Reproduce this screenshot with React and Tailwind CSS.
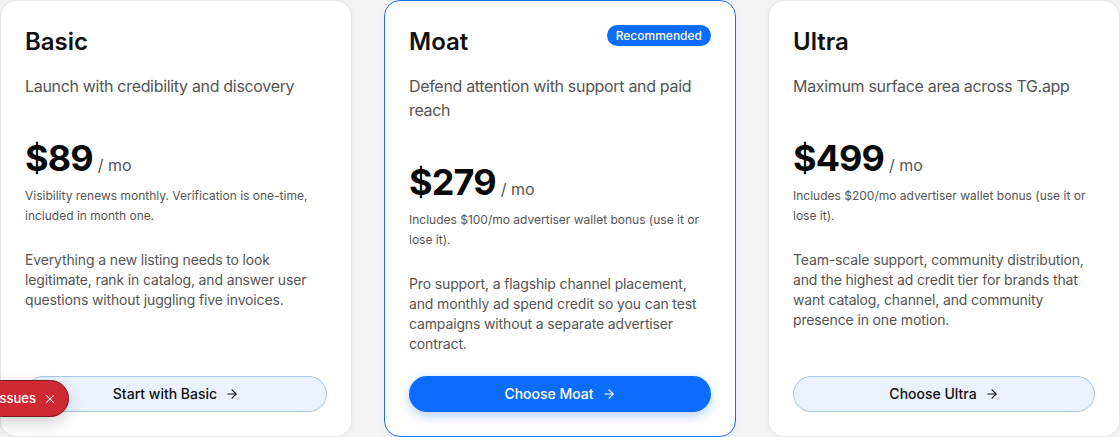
import { ArrowRight, X } from 'lucide-react';

const plans = [
  {
    name: 'Basic',
    tagline: 'Launch with credibility and discovery',
    price: '$89',
    note: 'Visibility renews monthly. Verification is one-time, included in month one.',
    body: 'Everything a new listing needs to look legitimate, rank in catalog, and answer user questions without juggling five invoices.',
    cta: 'Start with Basic',
  },
  {
    name: 'Moat',
    tagline: 'Defend attention with support and paid reach',
    price: '$279',
    note: 'Includes $100/mo advertiser wallet bonus (use it or lose it).',
    body: 'Pro support, a flagship channel placement, and monthly ad spend credit so you can test campaigns without a separate advertiser contract.',
    cta: 'Choose Moat',
    featured: true,
  },
  {
    name: 'Ultra',
    tagline: 'Maximum surface area across TG.app',
    price: '$499',
    note: 'Includes $200/mo advertiser wallet bonus (use it or lose it).',
    body: 'Team-scale support, community distribution, and the highest ad credit tier for brands that want catalog, channel, and community presence in one motion.',
    cta: 'Choose Ultra',
  },
];

function PlanCard({ plan }) {
  return (
    <div
      className={[
        'flex flex-col rounded-2xl border bg-white p-6',
        plan.featured
          ? 'border-[#1a73f0] shadow-[0_2px_10px_rgba(10,108,255,0.08)]'
          : 'border-[#e6e6e6] shadow-[0_1px_6px_rgba(0,0,0,0.05)]',
      ].join(' ')}
    >
      <div className="flex items-start justify-between">
        <h3 className="pt-px text-2xl leading-8 font-semibold text-[#111]">{plan.name}</h3>
        {plan.featured && (
          <span className="rounded-full bg-[#0b6cff] px-[9px] py-[2px] text-xs leading-[17px] font-medium text-white">
            Recommended
          </span>
        )}
      </div>
      <p className="mt-4 text-base leading-6 tracking-[-0.02em] text-[#555]">{plan.tagline}</p>
      <div className="mt-10 flex items-baseline gap-[5px]">
        <span className="text-4xl leading-10 font-bold tracking-tight text-[#0a0a0a]">{plan.price}</span>
        <span className="text-base text-[#555]">/ mo</span>
      </div>
      <p className="mt-2 text-xs leading-5 text-[#555]">{plan.note}</p>
      <p className="mt-6 text-sm leading-5 tracking-[-0.01em] text-[#555]">{plan.body}</p>
      <button
        className={[
          'mt-auto flex h-9 w-full items-center justify-center gap-2 rounded-full text-sm font-medium',
          plan.featured
            ? 'bg-[#0b6cff] text-white shadow-[0_4px_12px_rgba(11,108,255,0.3)]'
            : 'border border-[#a8c5ee] bg-[#eaf2fe] text-[#111]',
        ].join(' ')}
      >
        {plan.cta}
        <ArrowRight size={14} strokeWidth={2} />
      </button>
    </div>
  );
}

export default function App() {
  return (
    <div
      className="relative h-[437px] w-[1120px] overflow-hidden bg-[#f5f5f5]"
      style={{ fontFamily: 'Inter, "Noto Sans", sans-serif' }}
    >
      <div className="grid h-[437px] grid-cols-3 gap-8">
        {plans.map((p) => (
          <PlanCard key={p.name} plan={p} />
        ))}
      </div>

      <div className="absolute top-[380px] left-[-17px] flex h-[37px] items-center gap-[7px] rounded-full border border-[#6e1a1f] bg-[#cf2a33] pr-[11px] pl-[12px] text-[13px] font-medium text-white shadow-[0_6px_16px_rgba(0,0,0,0.18)]">
        Issues
        <X size={14} strokeWidth={1.75} />
      </div>
    </div>
  );
}
